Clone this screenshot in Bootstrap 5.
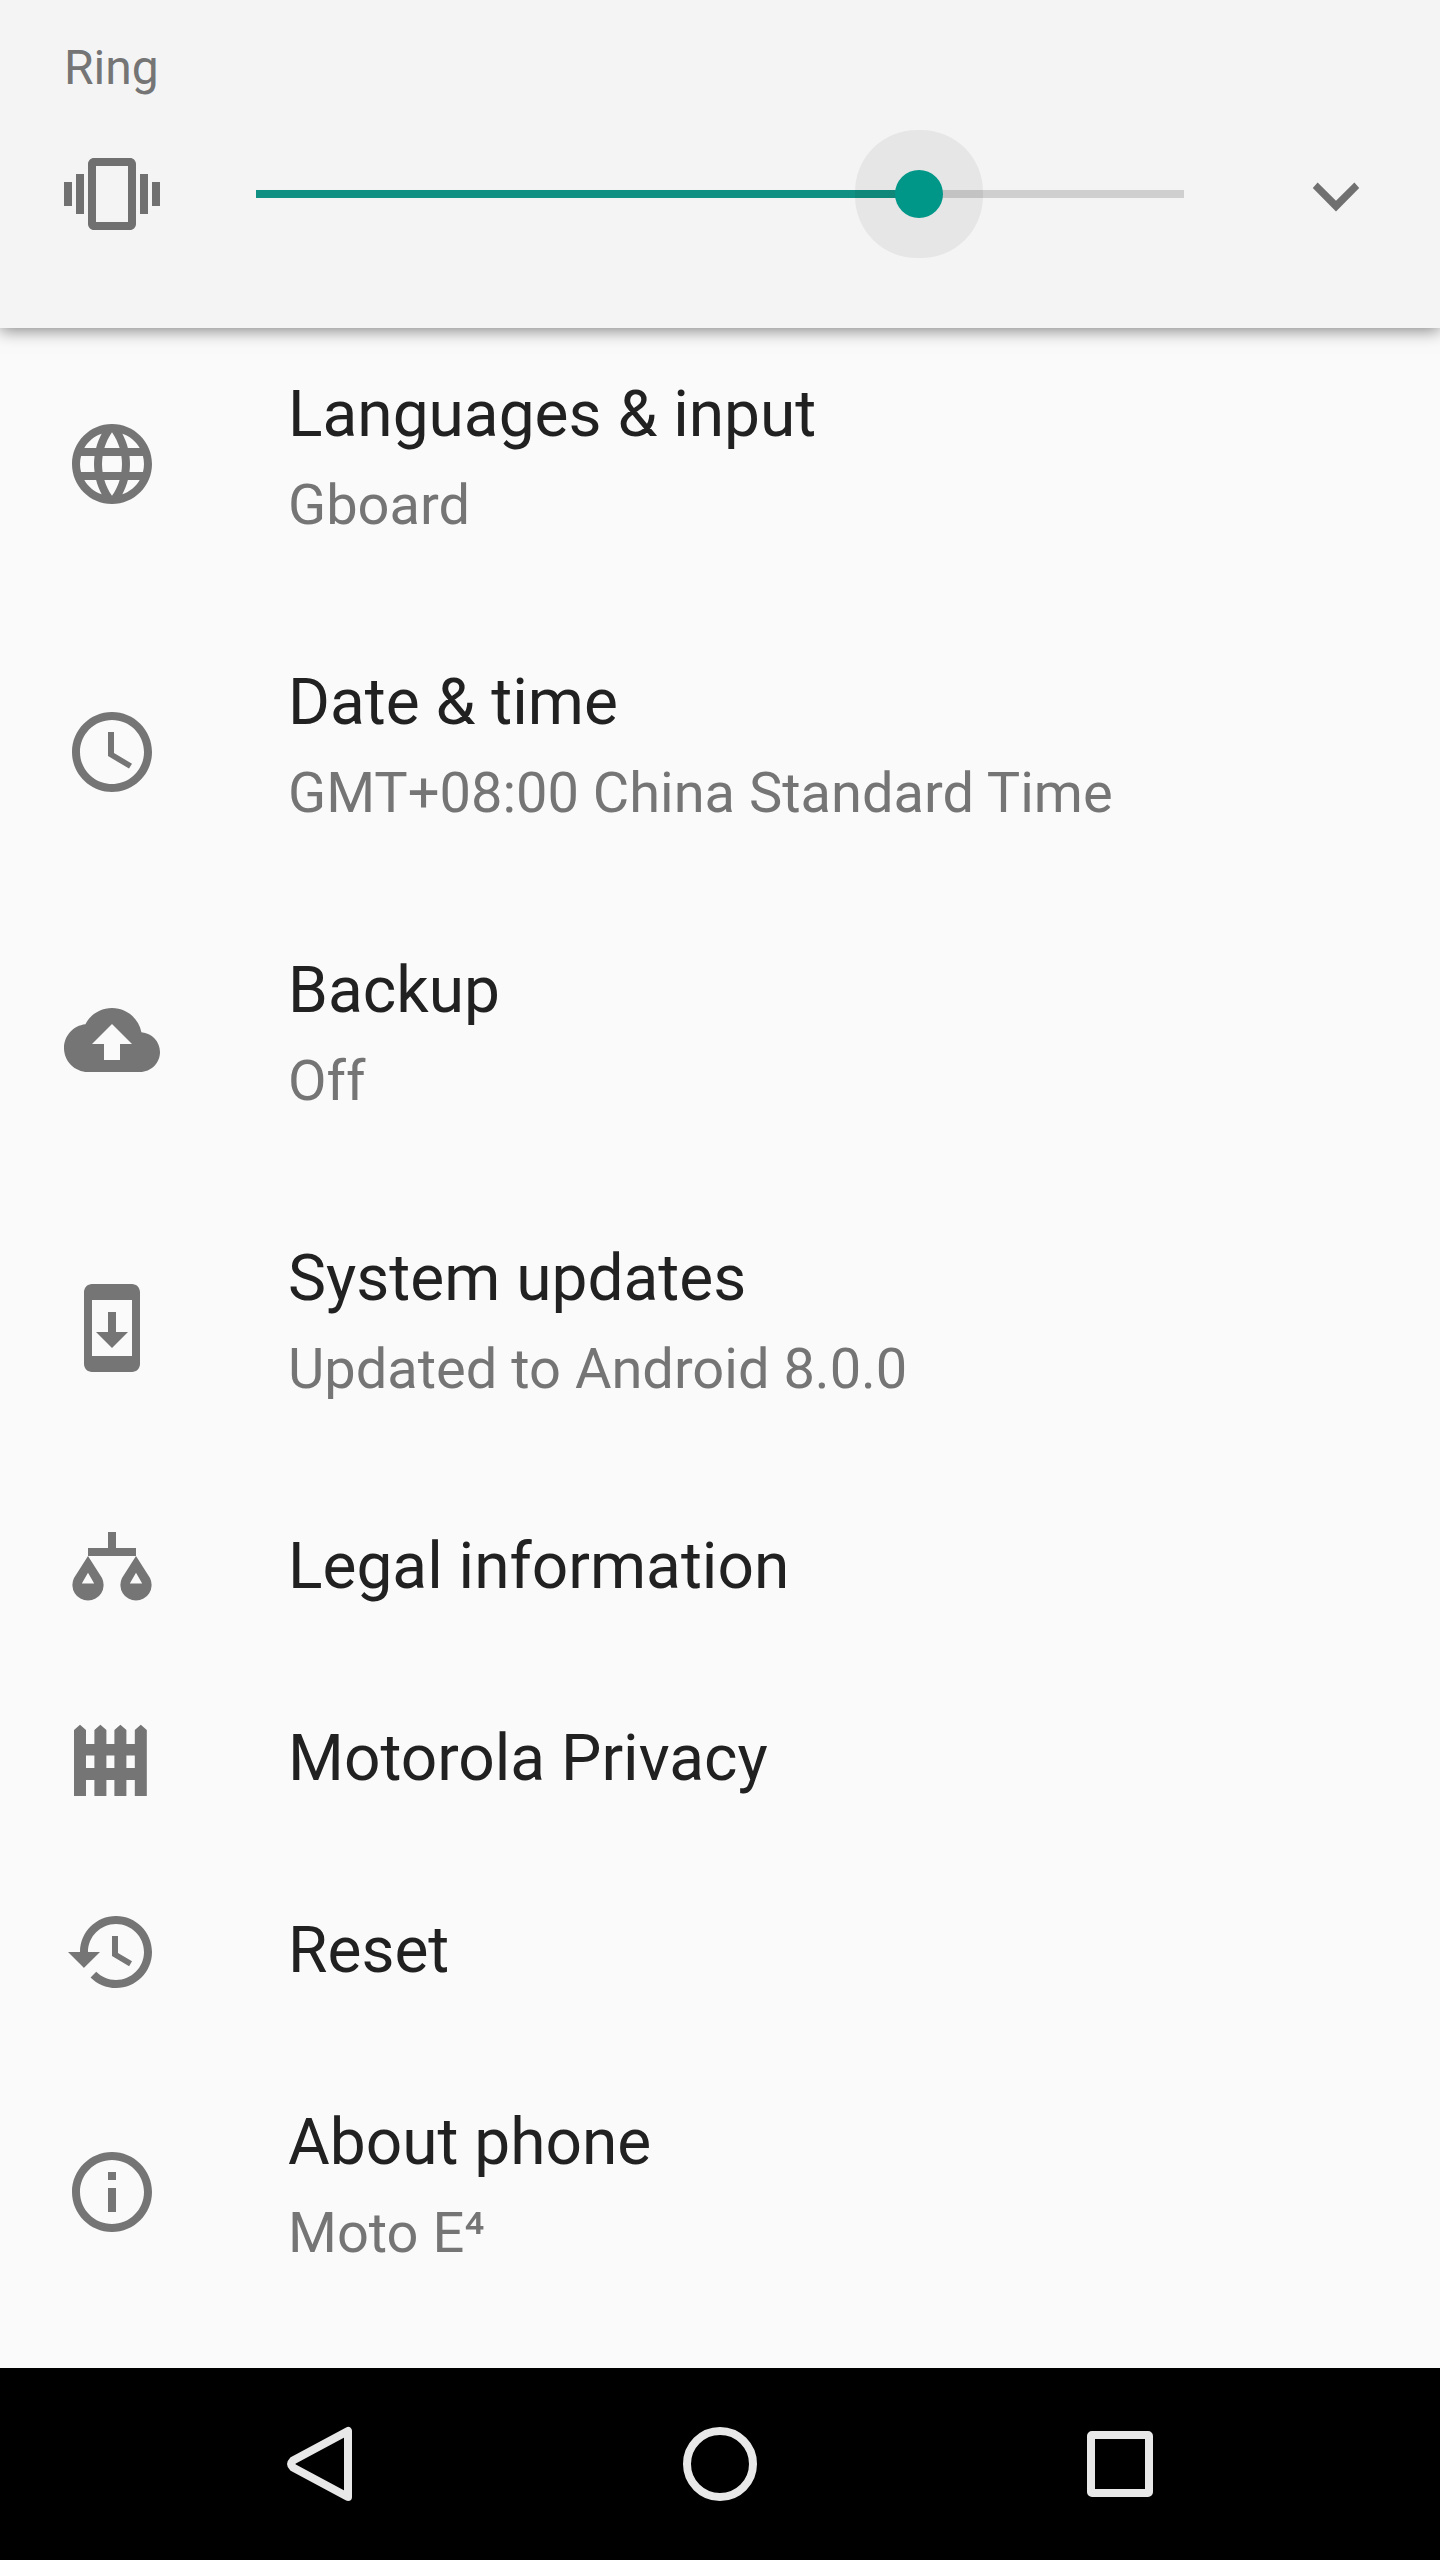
<!DOCTYPE html>
<html lang="en">
<head>
<meta charset="utf-8">
<meta name="viewport" content="width=device-width, initial-scale=1">
<title>System settings</title>
<link href="https://cdn.jsdelivr.net/npm/bootstrap@5.3.0/dist/css/bootstrap.min.css" rel="stylesheet">
<style>
  body { font-family: Roboto, "Noto Sans", sans-serif; background: #fafafa; color: #212121; }
  .glyph { width: 96px; height: 96px; fill: currentColor; flex: none; display: block; }

  /* volume panel */
  .volume-panel { background: #f4f4f4; color: #757575; padding: 40px 56px 70px 64px; z-index: 2; box-shadow: 0 2px 16px rgba(0, 0, 0, .5); }
  .volume-label { font-size: 48px; line-height: 56px; margin-bottom: 34px; }
  .volume-icon { margin-right: 72px; color: #707070; }
  .volume-toggle { margin-left: 80px; color: #707070; }
  .volume-slider { height: 128px; min-width: 0; appearance: none; -webkit-appearance: none; margin: 0; background: transparent; }
  .volume-slider::-webkit-slider-runnable-track {
    height: 48px;
    background:
      linear-gradient(#109082, #109082) 24px center / calc((100% - 48px) * 5 / 7) 8px no-repeat,
      linear-gradient(#cfcfcf, #cfcfcf) 24px center / calc(100% - 48px) 8px no-repeat;
  }
  .volume-slider::-webkit-slider-thumb {
    -webkit-appearance: none; width: 48px; height: 48px; border: 0; border-radius: 50%;
    background: #009688; box-shadow: 0 0 0 40px rgba(0, 0, 0, .055);
  }

  /* settings rows; the list starts scrolled slightly under the panel */
  .settings-list { margin-top: -8px; padding-bottom: 32px; }
  .setting { min-height: 192px; padding: 0 64px; background: transparent; color: #212121; }
  .setting-two { min-height: 288px; }
  .setting .glyph { color: #757575; margin-right: 128px; }
  .setting-text { padding-bottom: 2px; }
  .setting-title { font-size: 64px; line-height: 84px; }
  .setting-note { font-size: 56px; line-height: 96px; color: #757575; }

  /* system navigation */
  .system-nav { background: #000; padding: 0 120px; height: 192px; }
  .system-nav .btn { color: #e8e8e8; flex: 1 1 0; }
  .system-nav .glyph { fill: none; stroke: currentColor; stroke-width: 8; stroke-linejoin: round; }
</style>
</head>
<body>
<div class="d-flex flex-column min-vh-100">
  <header class="volume-panel position-relative">
    <label for="ring" class="volume-label d-block">Ring</label>
    <div class="d-flex align-items-center">
      <svg class="glyph volume-icon" viewBox="0 0 24 24" aria-hidden="true"><path d="M0 15h2V9H0v6zm3 2h2V7H3v10zm19-8v6h2V9h-2zm-3 8h2V7h-2v10zM16.500 3h-9C6.670 3 6 3.670 6 4.500v15c0 .83.67 1.500 1.500 1.500h9c.83 0 1.500-.67 1.500-1.500v-15c0-.83-.67-1.500-1.500-1.500zM16 19H8V5h8v14z"/></svg>
      <input type="range" id="ring" class="volume-slider flex-grow-1" min="0" max="7" step="1" value="5">
      <button type="button" class="volume-toggle btn p-0 border-0" aria-label="Expand">
        <svg class="glyph" viewBox="0 0 24 24" aria-hidden="true"><path d="M16.600 9.100 12 13.700 7.400 9.100 6.200 10.500 12 16.400l5.800-5.900z"/></svg>
      </button>
    </div>
  </header>

  <main class="flex-grow-1">
    <div class="list-group list-group-flush settings-list">
      <a href="#" class="list-group-item border-0 d-flex align-items-center setting setting-two">
        <svg class="glyph" viewBox="0 0 24 24" aria-hidden="true"><path d="M11.990 2C6.470 2 2 6.480 2 12s4.470 10 9.990 10C17.520 22 22 17.520 22 12S17.520 2 11.990 2zm6.930 6h-2.950c-.32-1.250-.78-2.450-1.380-3.560 1.840.63 3.370 1.910 4.330 3.560zM12 4.040c.83 1.200 1.480 2.530 1.910 3.960h-3.820c.43-1.430 1.080-2.760 1.910-3.960zM4.260 14C4.100 13.360 4 12.690 4 12s.1-1.360.26-2h3.380c-.08.66-.14 1.320-.14 2s.06 1.340.14 2H4.260zm.82 2h2.950c.32 1.250.78 2.450 1.380 3.560-1.840-.63-3.370-1.900-4.330-3.560zm2.950-8H5.080c.96-1.660 2.490-2.930 4.330-3.560C8.810 5.550 8.350 6.750 8.030 8zM12 19.960c-.83-1.200-1.480-2.530-1.910-3.960h3.820c-.43 1.430-1.080 2.760-1.910 3.960zM14.340 14H9.660c-.09-.66-.16-1.320-.16-2s.07-1.350.16-2h4.680c.09.65.16 1.320.16 2s-.07 1.340-.16 2zm.25 5.560c.6-1.110 1.060-2.310 1.380-3.560h2.950c-.96 1.650-2.490 2.930-4.330 3.560zM16.360 14c.08-.66.14-1.320.14-2s-.06-1.340-.14-2h3.380c.16.64.26 1.310.26 2s-.1 1.360-.26 2h-3.380z"/></svg>
        <div class="setting-text"><div class="setting-title">Languages &amp; input</div><div class="setting-note">Gboard</div></div>
      </a>
      <a href="#" class="list-group-item border-0 d-flex align-items-center setting setting-two">
        <svg class="glyph" viewBox="0 0 24 24" aria-hidden="true"><path d="M11.990 2C6.470 2 2 6.480 2 12s4.470 10 9.990 10C17.520 22 22 17.520 22 12S17.520 2 11.990 2zM12 20c-4.420 0-8-3.580-8-8s3.580-8 8-8 8 3.580 8 8-3.580 8-8 8zm.5-13H11v6l5.250 3.150.75-1.230-4.500-2.670z"/></svg>
        <div class="setting-text"><div class="setting-title">Date &amp; time</div><div class="setting-note">GMT+08:00 China Standard Time</div></div>
      </a>
      <a href="#" class="list-group-item border-0 d-flex align-items-center setting setting-two">
        <svg class="glyph" viewBox="0 0 24 24" aria-hidden="true"><path d="M19.350 10.040C18.670 6.590 15.640 4 12 4 9.110 4 6.600 5.640 5.350 8.040 2.340 8.360 0 10.910 0 14c0 3.310 2.690 6 6 6h13c2.760 0 5-2.240 5-5 0-2.640-2.050-4.780-4.650-4.960zM14 13v4h-4v-4H7l5-5 5 5h-3z"/></svg>
        <div class="setting-text"><div class="setting-title">Backup</div><div class="setting-note">Off</div></div>
      </a>
      <a href="#" class="list-group-item border-0 d-flex align-items-center setting setting-two">
        <svg class="glyph" viewBox="0 0 24 24" aria-hidden="true"><path d="M17 1H7c-1.100 0-2 .9-2 2v18c0 1.100.9 2 2 2h10c1.100 0 2-.9 2-2V3c0-1.100-.9-2-2-2zm0 18H7V5h10v14zm-1-6h-3V8h-2v5H8l4 4 4-4z"/></svg>
        <div class="setting-text"><div class="setting-title">System updates</div><div class="setting-note">Updated to Android 8.0.0</div></div>
      </a>
      <a href="#" class="list-group-item border-0 d-flex align-items-center setting">
        <svg class="glyph" viewBox="0 0 24 24" aria-hidden="true"><path fill-rule="evenodd" d="M11 3h2v4h5v2H6V7h5zM6 9 2.500 14.500A3.900 3.900 0 1 0 9.500 14.500zM6 13.200 7.550 15.900H4.450zM18 9 14.500 14.500A3.900 3.900 0 1 0 21.500 14.500zM18 13.200 19.550 15.900H16.450z"/></svg>
        <div class="setting-text"><div class="setting-title">Legal information</div></div>
      </a>
      <a href="#" class="list-group-item border-0 d-flex align-items-center setting">
        <svg class="glyph" viewBox="0 0 24 24" aria-hidden="true"><path d="M2.500 21V4.500L4 3.200 5.500 4.500V8H7.600V4.500L9.100 3.200 10.600 4.500V8H12.600V4.500L14.100 3.200 15.600 4.500V8H17.700V4.500L19.200 3.200 20.700 4.500V21H17.700V17H15.600V21H12.600V17H10.600V21H7.600V17H5.500V21zM5.500 10.900V14H7.600V10.900zM10.600 10.900V14H12.600V10.900zM15.600 10.900V14H17.700V10.900z" fill-rule="evenodd"/></svg>
        <div class="setting-text"><div class="setting-title">Motorola Privacy</div></div>
      </a>
      <a href="#" class="list-group-item border-0 d-flex align-items-center setting">
        <svg class="glyph" viewBox="0 0 24 24" aria-hidden="true"><path d="M13 3c-4.970 0-9 4.030-9 9H1l3.890 3.890.07.14L9 12H6c0-3.870 3.130-7 7-7s7 3.130 7 7-3.130 7-7 7c-1.930 0-3.680-.79-4.940-2.060l-1.420 1.420C8.270 19.990 10.510 21 13 21c4.970 0 9-4.030 9-9s-4.030-9-9-9zm-1 5v5l4.280 2.540.72-1.210-3.500-2.080V8H12z"/></svg>
        <div class="setting-text"><div class="setting-title">Reset</div></div>
      </a>
      <a href="#" class="list-group-item border-0 d-flex align-items-center setting setting-two">
        <svg class="glyph" viewBox="0 0 24 24" aria-hidden="true"><path d="M11 17h2v-6h-2v6zm1-15C6.480 2 2 6.480 2 12s4.480 10 10 10 10-4.480 10-10S17.520 2 12 2zm0 18c-4.410 0-8-3.590-8-8s3.590-8 8-8 8 3.590 8 8-3.590 8-8 8zM11 9h2V7h-2v2z"/></svg>
        <div class="setting-text"><div class="setting-title">About phone</div><div class="setting-note">Moto E⁴</div></div>
      </a>
    </div>
  </main>

  <nav class="system-nav d-flex align-items-center" aria-label="System">
    <button type="button" class="btn border-0 p-0 d-flex justify-content-center" aria-label="Back"><svg class="glyph" viewBox="0 0 96 96" aria-hidden="true"><path d="M76 15v66L21 51.500q-3.500-3.500 0-7z"/></svg></button>
    <button type="button" class="btn border-0 p-0 d-flex justify-content-center" aria-label="Home"><svg class="glyph" viewBox="0 0 96 96" aria-hidden="true"><circle cx="48" cy="48" r="33"/></svg></button>
    <button type="button" class="btn border-0 p-0 d-flex justify-content-center" aria-label="Recent apps"><svg class="glyph" viewBox="0 0 96 96" aria-hidden="true"><rect x="19" y="19" width="58" height="58" rx="1"/></svg></button>
  </nav>
</div>
<script src="https://cdn.jsdelivr.net/npm/bootstrap@5.3.0/dist/js/bootstrap.bundle.min.js"></script>
</body>
</html>
